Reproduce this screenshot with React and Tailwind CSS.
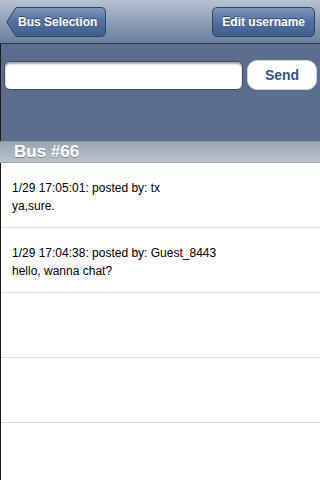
import React from 'react';

const messages = [
  { stamp: '1/29 17:05:01', user: 'tx', text: 'ya,sure.' },
  { stamp: '1/29 17:04:38', user: 'Guest_8443', text: 'hello, wanna chat?' },
  null,
  null,
  null,
];

const BackButton = ({ label }) => (
  <div className="relative h-[30px] flex items-center">
    <svg width="13" height="30" viewBox="0 0 13 30" className="block">
      <defs>
        <linearGradient id="bb" x1="0" y1="0" x2="0" y2="1">
          <stop offset="0" stopColor="#7d97bf" />
          <stop offset="0.5" stopColor="#4f6f9f" />
          <stop offset="1" stopColor="#3f5f90" />
        </linearGradient>
      </defs>
      <path d="M13 0.5 L10 0.5 L0.8 15 L10 29.5 L13 29.5 Z" fill="url(#bb)" stroke="#2f4466" strokeWidth="1" />
    </svg>
    <div className="h-[30px] -ml-px pl-0 pr-[8px] flex items-center rounded-r-[5px] border border-l-0 border-[#2f4466] bg-gradient-to-b from-[#7d97bf] via-[#4f6f9f] to-[#3f5f90] text-white text-[12px] font-bold [text-shadow:0_-1px_0_rgba(0,0,0,0.45)]">
      {label}
    </div>
  </div>
);

export default function App() {
  return (
    <div className="w-[320px] h-[480px] overflow-hidden bg-white flex flex-col font-['Liberation_Sans',Arial,sans-serif]">
      {/* nav bar */}
      <div className="h-[44px] shrink-0 flex items-center justify-between pl-[6px] pr-[5px] bg-gradient-to-b from-[#b7c3d3] via-[#8d9fb9] to-[#6b81a0] border-b border-[#2b3544]">
        <BackButton label="Bus Selection" />
        <div className="h-[30px] px-[9px] flex items-center rounded-[5px] border border-[#2f4466] bg-gradient-to-b from-[#7d97bf] via-[#4f6f9f] to-[#3f5f90] text-white text-[12px] font-bold [text-shadow:0_-1px_0_rgba(0,0,0,0.45)]">
          Edit username
        </div>
      </div>

      {/* compose */}
      <div className="h-[97px] shrink-0 bg-[#5a6d8f] border-l border-[#1a1a1a] pl-[3px] pr-[3px] pt-[16px]">
        <div className="flex items-start gap-[4px]">
          <div className="w-[239px] h-[29px] mt-px rounded-[6px] bg-white border border-[#3e4c63] shadow-[inset_0_2px_2px_rgba(0,0,0,0.35)]" />
          <div className="w-[70px] h-[30px] rounded-[10px] bg-white border border-[#cfd6e0] flex items-center justify-center text-[14px] font-bold text-[#33528a]">
            Send
          </div>
        </div>
      </div>

      {/* section header */}
      <div className="h-[22px] shrink-0 flex items-center pl-[14px] bg-gradient-to-b from-[#98a5b2] to-[#b9c3c9] border-t border-[#8b98a5] border-b border-b-[#9aa3ab] text-white text-[17px] font-bold [text-shadow:0_1px_0_rgba(80,90,100,0.6)]">
        Bus #66
      </div>

      {/* rows */}
      <div className="flex-1 border-l border-[#1a1a1a]">
        {messages.map((m, i) => (
          <div key={i} className="h-[65px] border-b border-[#dcdcdc] pl-[11px] pt-[16px] text-[12px] leading-[18px] text-black">
            {m && (
              <>
                <div>{m.stamp}: posted by: {m.user}</div>
                <div>{m.text}</div>
              </>
            )}
          </div>
        ))}
      </div>
    </div>
  );
}
